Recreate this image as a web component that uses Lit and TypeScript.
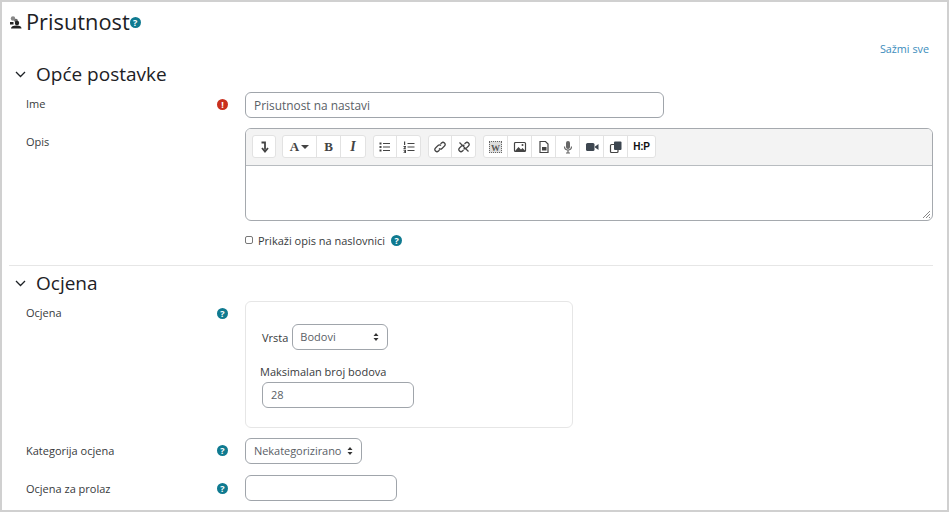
import { LitElement, html, css, svg } from "lit";
import { customElement } from "lit/decorators.js";

const help = () => html`<span class="help">?</span>`;

const ic = (body: unknown) =>
  html`<svg class="ic" width="14" height="14" viewBox="0 0 14 14" fill="none" stroke="#444" stroke-width="1.200">${body}</svg>`;

const groups: { w: number; i: unknown }[][] = [
  [{ w: 22, i: ic(svg`<path d="M4.500 2.500h3.500v7M5 8l3 3.500L11 8" stroke-width="1.800"/>`) }],
  [
    { w: 34, i: html`<span class="ta">A</span><span class="caret"></span>` },
    { w: 24, i: html`<span class="tb">B</span>` },
    { w: 24, i: html`<span class="ti">I</span>` },
  ],
  [
    { w: 23, i: ic(svg`<path d="M5 3.500h7M5 7h7M5 10.500h7" /><path d="M1.500 2.500h2v2h-2zM1.500 6h2v2h-2zM1.500 9.500h2v2h-2z" fill="#444" stroke="none"/>`) },
    { w: 23, i: ic(svg`<path d="M5.500 3.500h7M5.500 7h7M5.500 10.500h7" /><path d="M2 1.500h1.200v3.500H2zM1.500 6h2.500v1.200l-1.300 1h1.300v1h-2.500v-1l1.300-1.200h-1.300zM1.500 10h2.500v3h-2.500v-.8h1.500v-.4h-1v-.7h1v-.3h-1.500z" fill="#444" stroke="none"/>`) },
  ],
  [
    { w: 23, i: ic(svg`<path d="M6 8.500a2 2 0 0 0 3 0l2.500-2.500a2.100 2.100 0 0 0-3-3L7.500 4M8 5.500a2 2 0 0 0-3 0L2.500 8a2.100 2.100 0 0 0 3 3l1-1" />`) },
    { w: 23, i: ic(svg`<path d="M6.500 8.500a2 2 0 0 0 2.500 0l2.500-2.500a2.100 2.100 0 0 0-3-3L7.500 4M7.500 5.500a2 2 0 0 0-2.500 0L2.500 8a2.100 2.100 0 0 0 3 3l1-1M2.500 2.500l9 9" />`) },
  ],
  [
    { w: 24, i: html`<span class="wiki">W</span>` },
    { w: 24, i: ic(svg`<rect x="1.500" y="2.500" width="11" height="9" rx="1" /><path d="M2 11l3.500-4 2.500 2.500 1.500-1.500 3 3z" fill="#444" stroke="none"/><circle cx="9.500" cy="5" r="1" fill="#444" stroke="none"/>`) },
    { w: 24, i: ic(svg`<path d="M3 1.500h5.500L11 4v8.500H3z" /><path d="M5 7h4.500v3.500H5z" fill="#444" stroke="none"/>`) },
    { w: 24, i: ic(svg`<rect x="5" y="1" width="4" height="8" rx="2" fill="#666" stroke="none"/><path d="M3.500 6.500a3.500 3.500 0 0 0 7 0M7 10v2.500M5 13h4" stroke="#666"/>`) },
    { w: 24, i: ic(svg`<rect x="1" y="3" width="8.500" height="8" rx="1.500" fill="#3d4650" stroke="none"/><path d="M10 6.500l3.500-2.500v6l-3.500-2.500z" fill="#3d4650" stroke="none"/>`) },
    { w: 24, i: ic(svg`<rect x="1.500" y="4.500" width="7.500" height="8" rx="1" /><rect x="5" y="1.500" width="7.500" height="8.500" rx="1" fill="#3d4650" stroke="none"/>`) },
    { w: 27, i: html`<span class="hp">H:P</span>` },
  ],
];

@customElement("app-root")
export class AppRoot extends LitElement {
  static styles = css`
    :host {
      display: block;
      box-sizing: border-box;
      width: 949px;
      height: 512px;
      overflow: hidden;
      border: 2px solid #d0d0d0;
      background: #fff;
      font-family: "Open Sans", sans-serif;
      font-size: 11px;
      color: #373a3c;
    }
    .page { padding: 7px 14px 0 7px; }
    .title { display: flex; align-items: center; height: 26px; }
    .act { width: 13px; margin-right: 4px; display: flex; }
    h1 { margin: 0; font-size: 21.800px; font-weight: 400; color: #1d2125; line-height: 26px; }
    .help {
      display: inline-block; flex: none; width: 11px; height: 11px; border-radius: 50%;
      background: #0f7a90; color: #fff; font-size: 9px; font-weight: 700; line-height: 11px; text-align: center;
    }
    .collapse { text-align: right; height: 14px; margin-top: 7px; padding-right: 4px; line-height: 14px; color: #3c8dbc; font-size: 10.800px; }
    .sec { display: flex; align-items: center; height: 24px; margin-top: 6px; font-size: 19px; color: #1d2125; }
    .chev { width: 11px; margin-left: 6px; margin-right: 10px; display: flex; }
    .row { display: grid; grid-template-columns: 191px 28px 1fr; margin-left: 17px; }
    .lab { font-size: 11px; }
    .ind { display: flex; }
    .err {
      display: inline-block; width: 11px; height: 11px; border-radius: 50%; background: #c9301e; color: #fff;
      font-size: 9px; font-weight: 700; line-height: 11px; text-align: center;
    }
    .input, .select {
      box-sizing: border-box; height: 26px; border: 1px solid #a0a5ab; border-radius: 6px;
      background: #fff; color: #5a6066; font-size: 11px; line-height: 24px; padding: 0 8px;
      display: flex; align-items: center; justify-content: space-between;
    }
    .r-ime { margin-top: 6px; }
    .r-ime .lab { padding-top: 4px; line-height: 16px; }
    .r-ime .ind { padding-top: 7px; }
    .r-ime .input { width: 419px; font-size: 11.900px; }
    .r-opis { margin-top: 10px; }
    .r-opis .lab { padding-top: 6px; line-height: 16px; }
    .editor { box-sizing: border-box; width: 688px; height: 93px; border: 1px solid #a5a9ae; border-radius: 6px; position: relative; overflow: hidden; }
    .toolbar { box-sizing: border-box; height: 37px; background: #f3f3f3; border-bottom: 1px solid #b8bcc0; display: flex; gap: 7px; padding: 6px 0 0 6px; }
    .group { display: flex; height: 23px; background: #fff; border: 1px solid #e2e2e2; border-radius: 3px; box-sizing: border-box; }
    .group:first-child { margin-right: -1px; }
    .btn { box-sizing: border-box; display: flex; align-items: center; justify-content: center; border-right: 1px solid #e2e2e2; color: #444; }
    .btn:last-child { border-right: 0; }
    .ta { font-family: "Liberation Serif", serif; font-weight: 700; font-size: 13px; margin-right: 2px; }
    .caret { width: 0; height: 0; border-left: 4px solid transparent; border-right: 4px solid transparent; border-top: 4px solid #444; }
    .tb { font-family: "Liberation Serif", serif; font-weight: 700; font-size: 13px; }
    .ti { font-family: "Liberation Serif", serif; font-style: italic; font-size: 14px; font-weight: 700; }
    .wiki { font-family: "Liberation Serif", serif; font-size: 9px; font-weight: 700; color: #555; width: 13px; height: 12px; line-height: 12px; text-align: center; background: #ddd; border: 1px dotted #666; box-sizing: border-box; }
    .hp { font-family: "Liberation Sans", sans-serif; font-size: 10px; font-weight: 700; color: #111; letter-spacing: -0.2px; }
    .grip { position: absolute; right: 1px; bottom: 1px; display: flex; }
    .check { display: flex; align-items: center; height: 14px; margin: 12px 0 0 0; font-size: 11px; }
    .box { box-sizing: border-box; width: 8px; height: 8px; border: 1px solid #777; border-radius: 2px; margin-right: 5px; }
    .check .help { margin-left: 6px; }
    hr { border: 0; border-top: 1px solid #e6e6e6; margin: 18px 0 0 0; height: 0; }
    .sec2 { margin-top: 5px; }
    .r-oc { margin-top: 6px; }
    .r-oc .lab { padding-top: 4px; line-height: 16px; }
    .r-oc .ind { padding-top: 7px; }
    .card { box-sizing: border-box; width: 328px; height: 127px; border: 1px solid #e6e6e6; border-radius: 6px; padding: 22px 0 0 16px; }
    .vr { display: flex; align-items: center; height: 26px; color: #373a3c; }
    .vr span { margin-right: 4px; }
    .sel1 { width: 96px; padding-left: 7px; }
    .mb { margin: 14px 0 0 -2px; line-height: 16px; height: 16px; }
    .num { width: 152px; margin-top: 2px; }
    .r-kat { margin-top: 10px; }
    .r-kat .lab { padding-top: 4px; line-height: 17px; }
    .r-kat .ind { padding-top: 7px; }
    .sel2 { width: 117px; letter-spacing: -0.05px; }
    .r-pr { margin-top: 11px; }
    .r-pr .lab { padding-top: 6px; line-height: 16px; }
    .r-pr .ind { padding-top: 8px; }
    .r-pr .input { width: 152px; }
    .updn { flex: none; display: flex; }
  `;

  private updn() {
    return html`<svg class="updn" width="6" height="8" viewBox="0 0 6 8"><path d="M3 0l2.500 3h-5zM3 8L.5 5h5z" fill="#333"/></svg>`;
  }

  private chev() {
    return html`<svg class="chev" width="11" height="7" viewBox="0 0 11 7"><path d="M1 1l4.500 4.500L10 1" fill="none" stroke="#1d2125" stroke-width="1.300"/></svg>`;
  }

  render() {
    return html`
      <div class="page">
        <div class="title">
          <span class="act"><svg width="13" height="13" viewBox="0 0 13 13"><circle cx="4" cy="2.500" r="2.200" fill="#888"/><circle cx="7" cy="4.500" r="1.800" fill="#666"/><circle cx="8" cy="7" r="2.200" fill="#222"/><path d="M1 6h3.500v2.500H1zM2 12.500c0-2 2-3 5.500-3s5 1 5 3z" fill="#222"/></svg></span>
          <h1>Prisutnost</h1>${help()}
        </div>
        <div class="collapse">Sažmi sve</div>
        <div class="sec">${this.chev()}Opće postavke</div>
        <div class="row r-ime">
          <div class="lab">Ime</div>
          <div class="ind"><span class="err">!</span></div>
          <div class="input">Prisutnost na nastavi</div>
        </div>
        <div class="row r-opis">
          <div class="lab">Opis</div>
          <div></div>
          <div>
            <div class="editor">
              <div class="toolbar">
                ${groups.map(
                  (g) => html`<div class="group">${g.map(
                    (b) => html`<div class="btn" style="width:${b.w}px">${b.i}</div>`
                  )}</div>`
                )}
              </div>
              <span class="grip"><svg width="9" height="9" viewBox="0 0 9 9"><path d="M8 1L1 8M8 4L4 8M8 7L7 8" stroke="#888" stroke-width="1"/></svg></span>
            </div>
            <div class="check"><span class="box"></span>Prikaži opis na naslovnici ${help()}</div>
          </div>
        </div>
        <hr />
        <div class="sec sec2">${this.chev()}Ocjena</div>
        <div class="row r-oc">
          <div class="lab">Ocjena</div>
          <div class="ind">${help()}</div>
          <div class="card">
            <div class="vr"><span>Vrsta</span><div class="select sel1">Bodovi ${this.updn()}</div></div>
            <div class="mb">Maksimalan broj bodova</div>
            <div class="input num">28</div>
          </div>
        </div>
        <div class="row r-kat">
          <div class="lab">Kategorija ocjena</div>
          <div class="ind">${help()}</div>
          <div class="select sel2">Nekategorizirano ${this.updn()}</div>
        </div>
        <div class="row r-pr">
          <div class="lab">Ocjena za prolaz</div>
          <div class="ind">${help()}</div>
          <div class="input"></div>
        </div>
      </div>
    `;
  }
}
